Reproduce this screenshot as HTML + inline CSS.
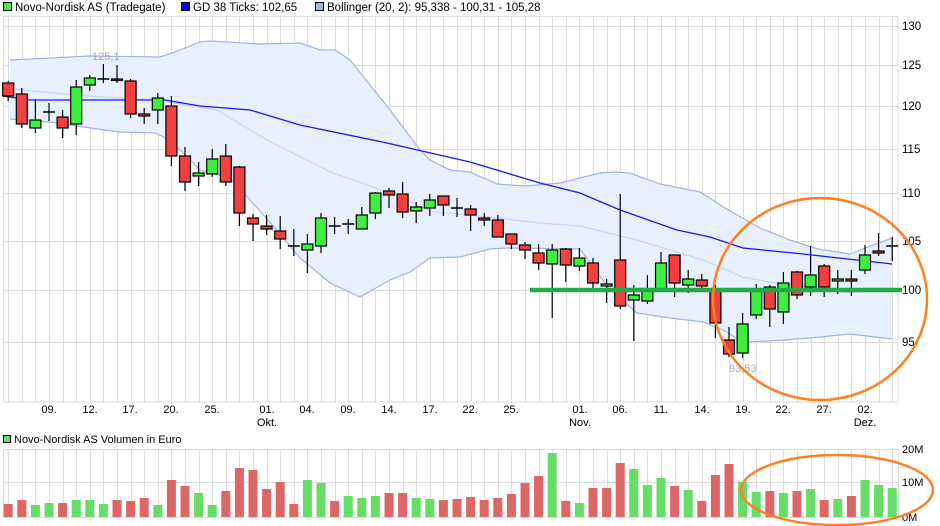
<!DOCTYPE html>
<html><head><meta charset="utf-8"><style>
body{margin:0;background:#fff;width:940px;height:526px;overflow:hidden;font-family:"Liberation Sans",sans-serif}
svg{display:block}
</style></head><body>
<svg id="s" width="940" height="526" xmlns="http://www.w3.org/2000/svg" font-family="Liberation Sans, sans-serif"></svg>
<script>
var s=document.getElementById('s'),h='';
function X(i){return 8.2+13.6*i}
// legend
h+='<rect x="3.5" y="2.5" width="8" height="8" fill="#44ee44" stroke="#000"/><text x="15" y="11" font-size="11.5">Novo-Nordisk AS (Tradegate)</text>';
h+='<rect x="181.5" y="2.5" width="8" height="8" fill="#0000ee" stroke="#000"/><text x="193" y="11" font-size="11.5">GD 38 Ticks: 102,65</text>';
h+='<rect x="315.5" y="2.5" width="8" height="8" fill="#9fb4e6" stroke="#000"/><text x="327" y="11" font-size="11.5">Bollinger (20, 2): 95,338 - 100,31 - 105,28</text>';
// grid main
var i;
for(i=0;i<66;i++){var x=Math.round(X(i))+.5;h+='<line x1="'+x+'" y1="16" x2="'+x+'" y2="402" stroke="#dcdcdc"/>';}
var ys=[[130,26],[125,65],[120,106],[115,149],[110,193],[105,241],[100,290],[95,342]];
ys.forEach(function(a){h+='<line x1="3" y1="'+(a[1]+.5)+'" x2="898" y2="'+(a[1]+.5)+'" stroke="#dcdcdc"/><text x="902" y="'+(a[1]+4)+'" font-size="11.5">'+a[0]+'</text>';});
h+='<rect x="3.5" y="16.5" width="894.5" height="385.5" fill="none" stroke="#dcdcdc"/>';
// bollinger
var up=[[10,60],[90,56],[160,57],[175,52],[200,42],[210,41],[260,44],[300,43],[320,50],[335,50],[350,60],[390,110],[420,150],[430,160],[450,170],[470,172],[497,184],[525,186],[560,183],[580,178],[600,173],[615,172],[630,173],[660,184],[700,192],[725,208],[760,228],[790,240],[818,249],[850,254],[873,245],[892,238]];
var lo=[[10,119],[50,122],[90,128],[120,132],[155,133],[170,140],[200,170],[230,178],[250,200],[275,228],[300,258],[330,283],[360,297],[390,280],[410,272],[430,258],[460,257],[490,249],[507,248],[580,249],[610,290],[637,313],[670,318],[703,322],[723,330],[743,342],[770,341],[810,338],[850,334],[892,339]];
function pts(a){return a.map(function(p){return p[0]+','+p[1]}).join(' ')}
h+='<polygon points="'+pts(up)+' '+pts(lo.slice().reverse())+'" fill="#e8effd"/>';
h+='<polyline points="'+pts(up)+'" fill="none" stroke="#9fb4e6" stroke-width="1.2"/>';
h+='<polyline points="'+pts(lo)+'" fill="none" stroke="#9fb4e6" stroke-width="1.2"/>';
var mid=[[10,89],[100,97],[157,100],[217,110],[267,140],[333,173],[393,194],[433,212],[470,215],[540,223],[580,226],[637,240],[703,260],[743,277],[770,282],[850,293],[892,288]];
h+='<polyline points="'+pts(mid)+'" fill="none" stroke="#c4d6fa" stroke-width="1.2"/>';
var gd=[[3,96],[30,100],[120,100],[165,100],[200,106],[250,110],[300,125],[387,143],[470,162],[540,183],[580,193],[620,210],[677,230],[710,237],[743,248],[803,254],[892,264]];
h+='<polyline points="'+pts(gd)+'" fill="none" stroke="#1a1aee" stroke-width="1.3"/>';
// candles: [color, top, bot, hi, lo]  r/g/d
var c=[['r',83,96,81,101],['r',94,124,88,128],['g',120,128,99,133],['d',112,112,103,121],['r',117,128,110,138],['g',87,124,80,135],['g',78,85,75,91],['d',79,79,64,83],['r',79,80,65,83],['r',81,114,79,118],['r',114,116,108,124],['g',98,110,93,124],['r',106,156,96,166],['r',156,182,147,191],['g',173,176,162,186],['g',159,174,149,177],['r',156,182,144,186],['r',167,213,166,226],['r',218,224,214,241],['r',226,229,215,235],['r',231,239,216,249],['d',246,246,229,256],['g',244,250,234,273],['g',218,246,213,253],['d',226,226,217,234],['d',224,224,219,234],['g',215,229,207,229],['g',193,213,192,219],['r',191,195,188,208],['r',194,212,182,218],['g',207,211,202,223],['g',200,208,194,216],['r',196,205,196,216],['d',208,208,198,217],['r',209,215,205,231],['r',218,220,213,226],['r',220,237,215,237],['r',234,244,234,249],['r',245,250,242,259],['r',253,263,244,270],['g',250,264,244,318],['r',249,265,248,282],['g',258,266,248,271],['r',263,283,258,288],['g',284,286,279,303],['r',260,306,194,309],['g',295,300,285,341],['g',290,301,275,304],['g',263,290,252,291],['r',255,283,255,297],['g',279,285,270,293],['r',280,286,274,288],['r',290,323,285,338],['r',340,354,327,357],['g',324,353,313,358],['g',290,315,284,319],['r',287,309,285,327],['g',283,312,272,324],['r',272,295,271,299],['g',275,287,246,296],['r',266,287,264,297],['g',279,281,270,294],['r',279,281,270,296],['g',255,270,245,274],['r',251,253,233,256],['d',246,246,237,261]];
c.forEach(function(k,i){var x=X(i);h+='<line x1="'+x+'" y1="'+k[3]+'" x2="'+x+'" y2="'+k[4]+'" stroke="#000" stroke-width="1.2"/>';
if(k[0]=='d'){h+='<line x1="'+(x-6)+'" y1="'+k[1]+'" x2="'+(x+6)+'" y2="'+k[1]+'" stroke="#000" stroke-width="1.5"/>';}
else{var hh=Math.max(k[2]-k[1],1.5);h+='<rect x="'+(x-5.5)+'" y="'+k[1]+'" width="11" height="'+hh+'" fill="'+(k[0]=='r'?'#f04040':'#3ef03e')+'" stroke="#000" stroke-width="1.2"/>';}});
h+='<text x="92" y="60" font-size="11" fill="#aaa">125,1</text><text x="729" y="372" font-size="11" fill="#aaa">93,53</text>';
h+='<line x1="530" y1="290" x2="902" y2="290" stroke="#22aa44" stroke-width="4.5"/>';
h+='<ellipse cx="820" cy="299" rx="107" ry="101" fill="none" stroke="#ff7f22" stroke-width="2.5"/>';
// x labels
var xl=[['09.',49],['12.',90],['17.',130],['20.',171],['25.',212],['01.',267],['04.',307],['09.',348],['14.',389],['17.',430],['22.',470],['25.',511],['01.',580],['06.',620],['11.',661],['14.',702],['19.',743],['22.',783],['27.',824],['02.',865]];
xl.forEach(function(a){h+='<text x="'+a[1]+'" y="413" font-size="11" text-anchor="middle">'+a[0]+'</text>';});
h+='<text x="267" y="426" font-size="11" text-anchor="middle">Okt.</text><text x="580" y="426" font-size="11" text-anchor="middle">Nov.</text><text x="865" y="426" font-size="11" text-anchor="middle">Dez.</text>';
// volume
h+='<rect x="3.5" y="435.5" width="7" height="7" fill="#66dd66" stroke="#000"/><text x="14" y="443" font-size="11">Novo-Nordisk AS Volumen in Euro</text>';
for(i=0;i<66;i++){var x=Math.round(X(i))+.5;h+='<line x1="'+x+'" y1="449" x2="'+x+'" y2="517" stroke="#dcdcdc"/>';}
[[449,'20M'],[482,'10M'],[517,'0M']].forEach(function(a){h+='<line x1="3" y1="'+(a[0]+.5)+'" x2="898" y2="'+(a[0]+.5)+'" stroke="#dcdcdc"/><text x="902" y="'+(a[0]+4)+'" font-size="11">'+a[1]+'</text>';});
h+='<line x1="3.5" y1="449" x2="3.5" y2="517" stroke="#dcdcdc"/><line x1="898.5" y1="449" x2="898.5" y2="517" stroke="#dcdcdc"/>';
var v=[342,'r',330,'r',345,'g',339,'g',339,'r',330,'g',330,'g',342,'g',330,'r',333,'r',324,'r',345,'g',270,'r',288,'r',309,'g',345,'g',303,'r',234,'r',240,'r',297,'r',276,'r',342,'r',270,'g',279,'g',333,'r',318,'g',324,'g',318,'g',309,'r',309,'r',324,'g',327,'g',330,'r',327,'r',321,'r',330,'r',324,'r',312,'r',279,'r',258,'r',189,'g',333,'r',339,'g',294,'r',294,'r',219,'r',237,'g',285,'g',264,'g',288,'r',300,'g',333,'r',255,'r',222,'r',276,'g',306,'g',303,'r',309,'g',303,'r',297,'g',330,'r',327,'g',318,'r',270,'g',285,'g',294,'g'];
for(i=0;i<66;i++){var t=390+v[2*i]/3;h+='<rect x="'+(X(i)-4.5)+'" y="'+t+'" width="9" height="'+(517-t)+'" fill="'+(v[2*i+1]=='r'?'#dd6666':'#66dd66')+'"/>';}
h+='<ellipse cx="837" cy="490" rx="96" ry="35" fill="none" stroke="#ff7f22" stroke-width="2.5"/>';
s.innerHTML=h;
</script>
</body></html>
